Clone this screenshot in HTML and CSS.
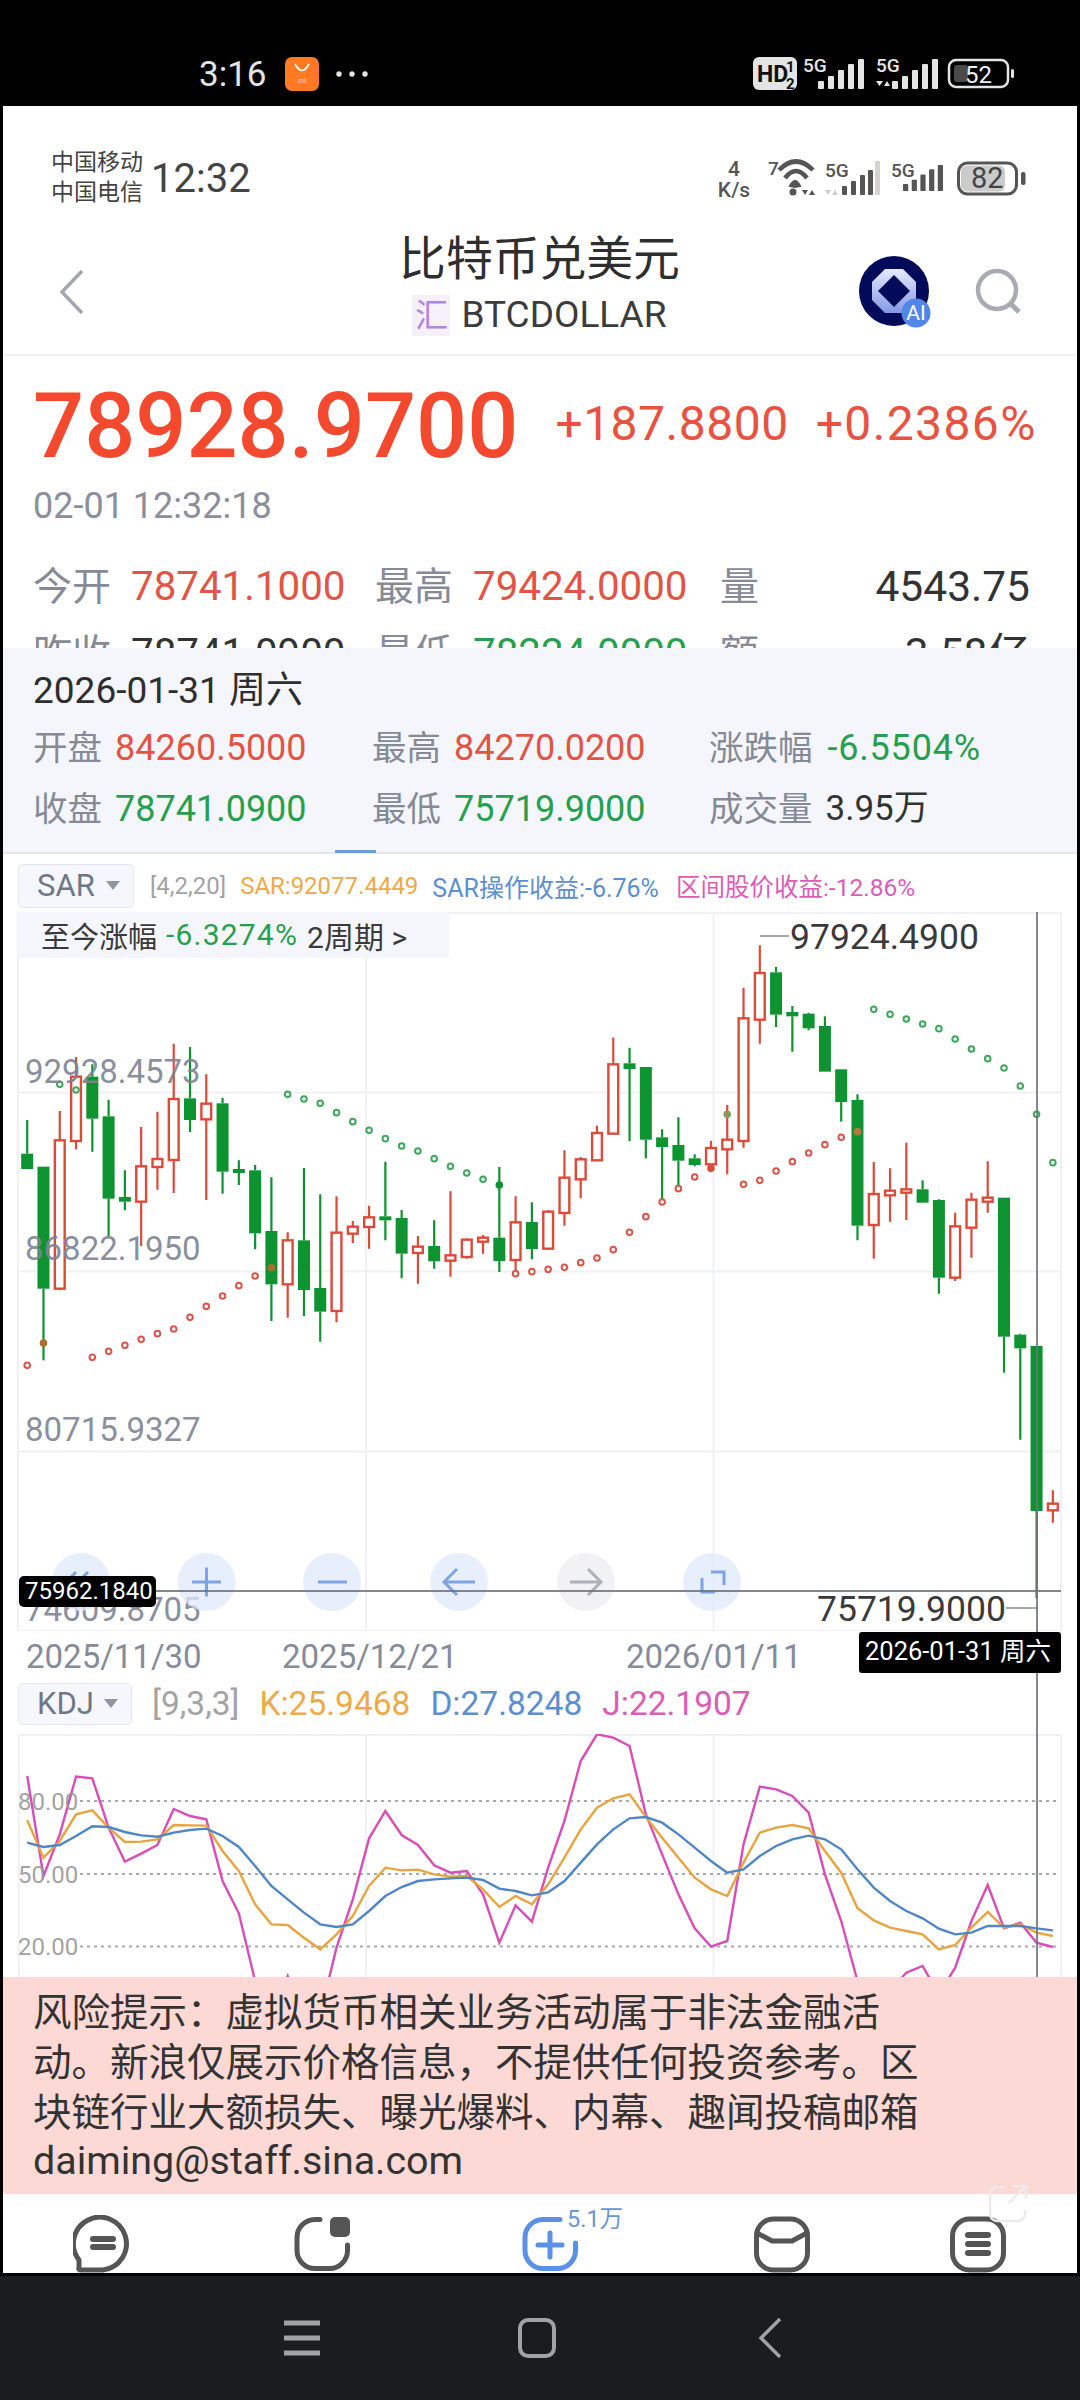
FILE: index.html
```html
<!DOCTYPE html>
<html lang="zh-CN">
<head>
    <meta charset="UTF-8">
    <meta name="viewport" content="width=device-width, initial-scale=1.0">
    <title>比特币兑美元</title>
    <link rel="stylesheet" href="styles.css">
</head>

<body>
    <svg class="defs" width="0" height="0">
        <symbol id="bars" viewBox="0 0 46 30">
            <rect x="0" y="22" width="6" height="8" rx="1"/>
            <rect x="10" y="17" width="6" height="13" rx="1"/>
            <rect x="20" y="11" width="6" height="19" rx="1"/>
            <rect x="30" y="5" width="6" height="25" rx="1"/>
            <rect x="40" y="0" width="6" height="30" rx="1"/>
        </symbol>
    </svg>

    <div class="screen">
        <div class="phone-status">
            <span class="phone-time">3:16</span>
            <svg class="shop-icon" viewBox="0 0 34 34" width="34" height="34">
                <rect width="34" height="34" rx="7" fill="#ff7a22"/>
                <path d="M10 7 Q17 20 24 7" fill="none" stroke="#fff" stroke-width="1.6"/>
                <text x="17" y="26" class="shop-mi">mi</text>
            </svg>
            <svg class="more-dots" viewBox="0 0 32 6" width="32" height="6">
                <circle cx="3" cy="3" r="2.7"/><circle cx="16" cy="3" r="2.7"/><circle cx="29" cy="3" r="2.7"/>
            </svg>
            <svg class="phone-icons" viewBox="750 55 270 40" width="270" height="40">
                <rect x="753" y="58" width="44" height="33" rx="6" fill="#e4e4e4"/>
                <text x="757" y="83" class="hd-text">HD</text>
                <text x="786" y="73" class="hd-sub">1</text>
                <text x="786" y="90" class="hd-sub">2</text>
                <text x="803" y="73" class="net-light">5G</text>
                <use href="#bars" x="818" y="60" width="46" height="30" fill="#e4e4e4"/>
                <text x="876" y="73" class="net-light">5G</text>
                <use href="#bars" x="892" y="60" width="46" height="30" fill="#e4e4e4"/>
                <path d="M876 82h7l-3.500 5zM884 87l3-5 3 5z" fill="#e4e4e4"/>
                <rect x="949" y="61" width="59" height="27" rx="7" fill="none" stroke="#e4e4e4" stroke-width="2.500"/>
                <rect x="954" y="66" width="14" height="17" rx="3" fill="#4a4a4a"/>
                <rect x="1011" y="70" width="3" height="9" rx="1.500" fill="#e4e4e4"/>
                <text x="965" y="84" class="batt-light">52</text>
            </svg>
        </div>

        <div class="app">
            <div class="sim-status">
                <div class="carriers"><div>中国移动</div><div>中国电信</div></div>
                <span class="sim-time">12:32</span>
                <svg class="sim-icons" viewBox="710 150 320 56" width="320" height="56">
                    <text x="734" y="176" class="speed">4</text>
                    <text x="734" y="197" class="speed">K/s</text>
                    <text x="768" y="175" class="wifi-num">7</text>
                    <path d="M779 170Q796 153 813 170M785 178Q796 164 807 178" fill="none" stroke="#555" stroke-width="4.500"/>
                    <path d="M790 186Q795 176 800 186L795 187z" fill="#555" stroke="#555" stroke-width="2"/>
                    <circle cx="793" cy="192" r="3.500" fill="#555"/>
                    <path d="M802 190h6l-3 5zM809 195l3-5 3 5z" fill="#555"/>
                    <text x="825" y="177" class="net-dark">5G</text>
                    <path d="M825 190h6l-3 5zM832 195l3-5 3 5z" fill="#ccc"/>
                    <g fill="#555">
                        <rect x="842" y="186" width="5" height="9" rx="1"/>
                        <rect x="851" y="181" width="5" height="14" rx="1"/>
                        <rect x="860" y="175" width="5" height="20" rx="1"/>
                        <rect x="868" y="170" width="5" height="25" rx="1"/>
                    </g>
                    <rect x="875" y="161" width="5" height="34" rx="1" fill="#d6d2d2"/>
                    <text x="891" y="177" class="net-dark">5G</text>
                    <use href="#bars" x="903" y="161" width="40" height="34" preserveAspectRatio="none" fill="#555"/>
                    <rect x="958.500" y="163" width="58" height="31" rx="9" fill="#fff" stroke="#555" stroke-width="3"/>
                    <rect x="961" y="165.500" width="44" height="26" rx="6" fill="#cbcbcb"/>
                    <rect x="1021" y="172" width="4.500" height="13" rx="2" fill="#555"/>
                    <text x="971" y="188" class="batt-dark">82</text>
                </svg>
            </div>

            <div class="title-bar">
                <svg class="back-icon" viewBox="0 0 30 46" width="30" height="46">
                    <path d="M26 2 L6 23 L26 44" fill="none" stroke="#a4a7af" stroke-width="3.500"/>
                </svg>
                <div class="title-text">
                    <div class="title-main">比特币兑美元</div>
                    <div class="title-sub"><span class="type-tag">汇</span><span>BTCDOLLAR</span></div>
                </div>
                <div class="title-tools">
                    <svg class="ai-icon" viewBox="0 0 72 72" width="72" height="72">
                        <defs>
                            <linearGradient id="ringFill" x1="0" y1="0" x2="0" y2="1">
                                <stop offset="0" stop-color="#e6eaff"/>
                                <stop offset="1" stop-color="#8397e6"/>
                            </linearGradient>
                        </defs>
                        <circle cx="35" cy="35" r="35" fill="#020a5a"/>
                        <path d="M26 13H44L57 26V44L44 57H26L13 44V26z" fill="url(#ringFill)"/>
                        <path d="M35 19L51 35L35 51L19 35z" fill="#020a5a"/>
                        <circle cx="57" cy="57" r="14.500" fill="#4f86e8"/>
                        <text x="57" y="64" class="ai-text">AI</text>
                    </svg>
                    <svg class="search-icon" viewBox="0 0 48 48" width="48" height="48">
                        <circle cx="22" cy="22" r="19" fill="none" stroke="#a9abb3" stroke-width="4.500"/>
                        <path d="M36 36L44 44" stroke="#a9abb3" stroke-width="5"/>
                    </svg>
                </div>
            </div>

            <div class="quote">
                <div class="price-line">
                    <span class="price">78928.9700</span>
                    <span class="change">+187.8800</span>
                    <span class="change change-pct">+0.2386%</span>
                </div>
                <div class="quote-time">02-01 12:32:18</div>
                <div class="stats">
                    <div class="stat"><span class="stat-label">今开</span><span class="red">78741.1000</span></div>
                    <div class="stat"><span class="stat-label">最高</span><span class="red">79424.0000</span></div>
                    <div class="stat stat-end"><span class="stat-label">量</span><span class="dark stat-big">4543.75</span></div>
                    <div class="stat"><span class="stat-label">昨收</span><span class="dark">78741.0900</span></div>
                    <div class="stat"><span class="stat-label">最低</span><span class="green">78224.0000</span></div>
                    <div class="stat stat-end"><span class="stat-label">额</span><span class="dark stat-big">3.58亿</span></div>
                </div>
            </div>

            <div class="day-tip">
                <div class="day-date">2026-01-31 周六</div>
                <div class="day-grid">
                    <div class="day-item"><span class="day-label">开盘</span><span class="red">84260.5000</span></div>
                    <div class="day-item"><span class="day-label">最高</span><span class="red">84270.0200</span></div>
                    <div class="day-item"><span class="day-label">涨跌幅</span><span class="green day-pct">-6.5504%</span></div>
                    <div class="day-item"><span class="day-label">收盘</span><span class="green">78741.0900</span></div>
                    <div class="day-item"><span class="day-label">最低</span><span class="green">75719.9000</span></div>
                    <div class="day-item"><span class="day-label">成交量</span><span class="dark day-vol">3.95万</span></div>
                </div>
            </div>

            <div class="charts">
                <div class="cross-v"></div>
                <div class="cross-h"></div>

                <div class="legend legend-sar">
                    <span class="tab-mark"></span>
                    <div class="chip"><span>SAR</span><i class="chip-arrow"></i></div>
                    <span class="legend-param">[4,2,20]</span>
                    <span class="orange">SAR:92077.4449</span>
                    <span class="blue legend-wide">SAR操作收益:-6.76%</span>
                    <span class="pink legend-last">区间股价收益:-12.86%</span>
                </div>

                <div class="chart-main">
                    <svg id="candleChart" viewBox="3 911 1074 719" width="1074" height="719">
                        <rect x="18" y="912" width="1043" height="718" class="frame"/>
                        <path d="M18 1091.500H1061M18 1270.500H1061M18 1450.500H1061M366 912V1630M713.500 912V1630" class="grid"/>
                        <g id="candles"></g>
                        <g id="sarDots"></g>
                        <text x="25" y="1082" class="axis-num">92928.4573</text>
                        <text x="25" y="1259" class="axis-num">86822.1950</text>
                        <text x="25" y="1440" class="axis-num">80715.9327</text>
                        <text x="25" y="1620" class="axis-num">74609.8705</text>
                        <path d="M760 935H789M1006 1607H1037" class="peak-line"/>
                        <text x="790" y="948" class="peak-num">97924.4900</text>
                        <text x="817" y="1620" class="peak-num">75719.9000</text>

                        <circle cx="81" cy="1581" r="29" class="btn"/>
                        <path d="M76 1571L66 1581L76 1591M88 1571L78 1581L88 1591" class="btn-line"/>
                        <circle cx="206.500" cy="1581" r="29" class="btn"/>
                        <path d="M192 1581H221M206.500 1566.500V1595.500" class="btn-line"/>
                        <circle cx="332" cy="1581" r="29" class="btn"/>
                        <path d="M318 1581H347" class="btn-line"/>
                        <circle cx="459" cy="1581" r="29" class="btn"/>
                        <path d="M444 1581H475M457 1568L444 1581L457 1594" class="btn-line"/>
                        <circle cx="586" cy="1581" r="29" class="btn-off"/>
                        <path d="M570 1581H601M588 1568L601 1581L588 1594" class="btn-off-line"/>
                        <circle cx="712" cy="1581" r="29" class="btn"/>
                        <path d="M711 1571H724V1584M702 1577V1591H715" class="btn-line"/>
                    </svg>
                    <div class="period-box">
                        <span>至今涨幅</span><span class="green period-pct">-6.3274%</span><span class="period-end">2周期 &gt;</span>
                    </div>
                </div>

                <div class="date-axis">
                    <span>2025/11/30</span><span>2025/12/21</span><span>2026/01/11</span>
                </div>

                <div class="legend legend-kdj">
                    <div class="chip chip-kdj"><span>KDJ</span><i class="chip-arrow"></i></div>
                    <span class="legend-param">[9,3,3]</span>
                    <span class="orange">K:25.9468</span>
                    <span class="blue">D:27.8248</span>
                    <span class="pink">J:22.1907</span>
                </div>

                <div class="chart-kdj">
                    <svg id="kdjChart" viewBox="3 1733 1074 243" width="1074" height="243">
                        <path d="M18 1734H1061M19 1734V1976M1061 1734V1976M366 1734V1976M713.500 1734V1976" class="grid"/>
                        <path d="M80 1800H1060M80 1873H1060M80 1945.500H1060" class="dotted"/>
                        <g id="kdjLines"></g>
                        <text x="18" y="1809" class="kdj-num">80.00</text>
                        <text x="18" y="1882" class="kdj-num">50.00</text>
                        <text x="18" y="1954" class="kdj-num">20.00</text>
                    </svg>
                </div>

                <div class="tag tag-price">75962.1840</div>
                <div class="tag tag-date">2026-01-31 周六</div>
            </div>

            <div class="notice">风险提示：虚拟货币相关业务活动属于非法金融活<br>动。新浪仅展示价格信息，不提供任何投资参考。区<br>块链行业大额损失、曝光爆料、内幕、趣闻投稿邮箱<div class="notice-mail">daiming@staff.sina.com</div></div>

            <div class="tabs">
                <svg viewBox="0 0 60 58" width="60" height="58">
                    <path d="M6 45A26.500 26.500 0 1 1 30 55H8Q5 55 6 52z" class="tab-line"/>
                    <path d="M20 24H40M20 32H40" class="tab-bars"/>
                </svg>
                <svg viewBox="0 0 56 58" width="56" height="58">
                    <path d="M26 4.500H21A18 18 0 0 0 3 22.500V35.500A18 18 0 0 0 21 53.500H35.500A18 18 0 0 0 53.500 35.500V30" class="tab-line"/>
                    <rect x="36" y="2" width="20" height="20" rx="5" fill="#555"/>
                </svg>
                <div class="tab-add">
                    <svg viewBox="0 0 56 58" width="56" height="58">
                        <path d="M38 4.500H21A18 18 0 0 0 3 22.500V35.500A18 18 0 0 0 21 53.500H35.500A18 18 0 0 0 53.500 35.500V28" class="tab-line tab-blue"/>
                        <path d="M16 30H40M28 18V42" class="tab-line tab-blue"/>
                    </svg>
                    <span class="tab-count">5.1万</span>
                </div>
                <svg viewBox="0 0 56 58" width="56" height="58">
                    <rect x="2.500" y="4" width="51" height="51" rx="17" class="tab-line"/>
                    <path d="M3 18L18 26H38L53 18" class="tab-line"/>
                </svg>
                <svg viewBox="0 0 56 58" width="56" height="58">
                    <rect x="2.500" y="4" width="51" height="51" rx="17" class="tab-line"/>
                    <path d="M18 20H38M18 29H38M18 38H38" class="tab-bars"/>
                </svg>
                <svg class="share-ghost" viewBox="0 0 40 40" width="40" height="40">
                    <path d="M16 3H9A7 7 0 0 0 2 10V30A7 7 0 0 0 9 37H30A7 7 0 0 0 37 30V26M21 19L37 3M25 2H38V15" fill="none" stroke="#ececf0" stroke-width="2.500"/>
                </svg>
            </div>
        </div>

        <div class="nav-gap"></div>
        <div class="nav">
            <svg viewBox="0 0 36 38" width="36" height="38">
                <path d="M0 4H36M0 19H36M0 34H36" stroke="#a2a2a2" stroke-width="5"/>
            </svg>
            <svg viewBox="0 0 38 40" width="38" height="40">
                <rect x="2" y="2" width="34" height="36" rx="8" fill="none" stroke="#a2a2a2" stroke-width="4"/>
            </svg>
            <svg class="nav-back" viewBox="0 0 24 40" width="24" height="40">
                <path d="M22 1L3 20L22 39" fill="none" stroke="#a2a2a2" stroke-width="3.500"/>
            </svg>
        </div>
    </div>

    <script src="chart.js"></script>
</body>

</html>
```

FILE: styles.css
```css
* {
    box-sizing: border-box;
}

body {
    margin: 0;
    background-color: #000;
    font-family: Roboto, "Noto Sans CJK SC", sans-serif;
    color: #333;
}

.defs {
    position: absolute;
}

.screen {
    width: 1080px;
    height: 2400px;
    display: flex;
    flex-direction: column;
    overflow: hidden;
}

svg {
    display: block;
    flex: none;
}

.red { color: #e25444; }
.green { color: #27a04e; }
.dark { color: #333; }
.orange { color: #ecaa48; }
.blue { color: #5c8fd0; }
.pink { color: #dd5cb6; }

/* phone status bar */
.phone-status {
    height: 106px;
    padding: 42px 60px 0 199px;
    display: flex;
    align-items: center;
    flex: none;
    color: #e4e4e4;
}

.phone-time {
    font-size: 35px;
    width: 86px;
}

.shop-mi {
    font-size: 7px;
    text-anchor: middle;
    fill: #ffd9b8;
}

.more-dots {
    margin-left: 17px;
    fill: #e4e4e4;
}

.phone-icons {
    margin-left: auto;
}

.hd-text {
    font-size: 23px;
    font-weight: 700;
    fill: #111;
}

.hd-sub {
    font-size: 15px;
    font-weight: 700;
    fill: #111;
}

.net-light {
    font-size: 19px;
    font-weight: 500;
    fill: #e4e4e4;
}

.batt-light {
    font-size: 24px;
    fill: #f0f0f0;
}

/* app window */
.app {
    margin: 0 3px;
    height: 2167px;
    background-color: #fff;
    flex: none;
    display: flex;
    flex-direction: column;
    overflow: hidden;
}

.sim-status {
    height: 120px;
    padding: 24px 47px 0 48px;
    display: flex;
    align-items: center;
    flex: none;
}

.carriers {
    font-size: 23px;
    line-height: 30px;
    color: #444;
}

.sim-time {
    margin-left: 8px;
    font-size: 40px;
    color: #444;
}

.sim-icons {
    margin-left: auto;
}

.speed {
    font-size: 21px;
    font-weight: 500;
    text-anchor: middle;
    fill: #555;
}

.wifi-num,
.net-dark {
    font-size: 19px;
    font-weight: 500;
    fill: #555;
}

.batt-dark {
    font-size: 29px;
    fill: #444;
}

/* title */
.title-bar {
    height: 130px;
    padding: 0 54px 12px 53px;
    border-bottom: 2px solid #eeeff2;
    display: grid;
    grid-template-columns: 1fr auto 1fr;
    align-items: center;
    flex: none;
}

.back-icon {
    margin-top: 15px;
}

.title-text {
    text-align: center;
    white-space: nowrap;
}

.title-main {
    font-size: 46.8px;
    line-height: 62px;
    color: #2e2e2e;
}

.title-sub {
    font-size: 37px;
    line-height: 50px;
    color: #3c3c3c;
    display: flex;
    justify-content: center;
    align-items: center;
    gap: 11px;
}

.type-tag {
    width: 38px;
    height: 41px;
    line-height: 41px;
    font-size: 33px;
    background-color: #f6f0fb;
    color: #ae88dc;
}

.title-tools {
    display: flex;
    justify-content: flex-end;
    align-items: center;
    gap: 44px;
    margin-top: 15px;
}

.ai-text {
    font-size: 21px;
    text-anchor: middle;
    fill: #fff;
}

/* quote */
.quote {
    height: 291.5px;
    padding: 20px 30px 0;
    overflow: hidden;
    flex: none;
}

.price-line {
    height: 100px;
    display: flex;
    align-items: center;
    white-space: nowrap;
}

.price {
    font-size: 90px;
    font-weight: 500;
    color: #f4492f;
    margin-right: 37px;
}

.change {
    font-size: 48px;
    letter-spacing: 0.5px;
    color: #e95240;
    margin-right: 27px;
    padding-bottom: 6px;
}

.change-pct {
    letter-spacing: 1.4px;
}

.quote-time {
    margin-top: 10px;
    font-size: 36px;
    line-height: 40px;
    color: #8b8f9b;
}

.stats {
    margin-top: 33px;
    display: grid;
    grid-template-columns: 342px 345px 310px;
    grid-auto-rows: 66.5px;
    font-size: 40.3px;
    line-height: 56px;
}

.stat {
    display: flex;
    gap: 20px;
    white-space: nowrap;
}

.stat-end {
    justify-content: space-between;
}

.stat-big {
    font-size: 42.5px;
}

.stat-label {
    font-size: 39px;
    color: #858a96;
}

/* selected day panel */
.day-tip {
    height: 204px;
    padding: 20px 30px 0;
    background-color: #f5f6fc;
    flex: none;
}

.day-date {
    font-size: 37px;
    line-height: 46px;
    color: #2e2e2e;
}

.day-grid {
    margin-top: 14px;
    display: grid;
    grid-template-columns: 339px 337px 1fr;
    grid-auto-rows: 61px;
    font-size: 36px;
    line-height: 40px;
}

.day-item {
    display: flex;
    gap: 13px;
    white-space: nowrap;
}

.day-pct {
    letter-spacing: 0.8px;
    margin-left: 2px;
}

.day-vol {
    font-size: 35px;
}

.day-label {
    font-size: 34.5px;
    color: #858a96;
}

/* charts */
.charts {
    position: relative;
    flex: none;
}

.cross-v {
    position: absolute;
    left: 1033px;
    top: 60px;
    bottom: 0;
    width: 2px;
    background-color: rgba(110, 115, 122, 0.85);
    z-index: 2;
}

.cross-h {
    position: absolute;
    left: 16px;
    right: 16px;
    top: 738px;
    height: 2px;
    background-color: rgba(110, 115, 122, 0.85);
    z-index: 2;
}

.tag {
    position: absolute;
    background-color: #000;
    color: #fff;
    font-size: 24px;
    z-index: 3;
    white-space: nowrap;
}

.tag-price {
    left: 16px;
    top: 724px;
    width: 137px;
    height: 31px;
    line-height: 31px;
    padding-left: 6px;
    border-radius: 5px;
}

.tag-date {
    left: 856px;
    top: 780px;
    width: 202px;
    height: 41px;
    line-height: 38px;
    padding-left: 6px;
    border-radius: 3px;
    font-size: 25.5px;
}

.legend {
    display: flex;
    align-items: center;
    white-space: nowrap;
    position: relative;
}

.legend-sar {
    height: 60px;
    padding: 6px 0 0 15px;
    border-top: 2px solid #e4e6eb;
    font-size: 24px;
    gap: 14px;
}

.legend-wide {
    font-size: 25px;
}

.legend-last {
    font-size: 24.5px;
    margin-left: 3px;
}

.legend-kdj {
    height: 51px;
    padding: 0 0 9px 15px;
    font-size: 33.5px;
    gap: 20px;
}

.tab-mark {
    position: absolute;
    left: 332px;
    top: -4px;
    width: 41px;
    height: 3px;
    background-color: #6f9bcf;
}

.chip {
    width: 116px;
    height: 44px;
    padding-left: 18px;
    margin-right: 2px;
    border: 1px solid #e3e6ee;
    border-radius: 5px;
    background-color: #f6f7fc;
    display: flex;
    align-items: center;
    gap: 11px;
    font-size: 31px;
    color: #6d7786;
}

.chip-kdj {
    width: 114px;
    height: 42px;
    margin-right: 0;
    gap: 10px;
}

.chip-arrow {
    width: 0;
    height: 0;
    border-left: 7px solid transparent;
    border-right: 7px solid transparent;
    border-top: 9px solid #8e96a3;
}

.legend-param {
    color: #a3a3a3;
}

.chart-main {
    position: relative;
    height: 719px;
    flex: none;
}

.frame {
    fill: #fff;
    stroke: #f0f1f6;
    stroke-width: 2;
}

.grid {
    fill: none;
    stroke: #f0f1f6;
    stroke-width: 2;
}

.axis-num {
    font-size: 33px;
    fill: rgba(125, 132, 146, 0.92);
}

.peak-num {
    font-size: 35.5px;
    fill: #3a3a3a;
}

.peak-line {
    fill: none;
    stroke: #a9a9a9;
    stroke-width: 2;
}

.btn {
    fill: rgba(223, 233, 252, 0.75);
}

.btn-line {
    fill: none;
    stroke: #7ea4e2;
    stroke-width: 3;
}

.btn-off {
    fill: rgba(238, 238, 241, 0.75);
}

.btn-off-line {
    fill: none;
    stroke: #adb0b8;
    stroke-width: 3;
}

.period-box {
    position: absolute;
    left: 15px;
    top: 0;
    width: 431px;
    height: 46px;
    padding-left: 23px;
    background-color: #f5f6fb;
    display: flex;
    align-items: center;
    gap: 9px;
    font-size: 29px;
    color: #3a3a3a;
    white-space: nowrap;
}

.period-pct {
    font-size: 30px;
    letter-spacing: 1.2px;
}

.period-end {
    font-size: 30px;
}

.date-axis {
    height: 52px;
    padding-left: 23px;
    display: grid;
    grid-template-columns: 256px 344px 1fr;
    align-items: center;
    font-size: 33px;
    color: #858b98;
}

.chart-kdj {
    height: 243px;
    flex: none;
}

.dotted {
    fill: none;
    stroke: #a9a9a9;
    stroke-width: 2;
    stroke-dasharray: 3 4;
}

.kdj-num {
    font-size: 24px;
    fill: rgba(150, 150, 150, 0.9);
}

/* notice */
.notice {
    height: 217px;
    padding: 11px 0 0 30px;
    background-color: #fdd9d6;
    font-size: 38.5px;
    line-height: 50px;
    color: #333;
    white-space: nowrap;
    flex: none;
}

.notice-mail {
    font-size: 39.4px;
    line-height: 46px;
}

/* bottom tabs */
.tabs {
    position: relative;
    height: 80px;
    padding: 21px 0 0 70px;
    display: grid;
    grid-template-columns: 221px 228px 232px 196px 1fr;
    overflow: visible;
    flex: none;
}

.tab-line {
    fill: none;
    stroke: #555;
    stroke-width: 5;
    stroke-linecap: round;
}

.tab-blue {
    stroke: #5b90e6;
}

.tab-bars {
    fill: none;
    stroke: #555;
    stroke-width: 6;
    stroke-linecap: round;
}

.tab-add {
    position: relative;
}

.tab-count {
    position: absolute;
    left: 45px;
    top: -9px;
    font-size: 23.5px;
    line-height: 26px;
    color: #6b95d8;
}

.share-ghost {
    position: absolute;
    left: 985px;
    top: -10px;
}

/* system navigation */
.nav-gap {
    height: 3px;
    flex: none;
}

.nav {
    flex: 1;
    background-color: #1b1c1e;
    padding-left: 284px;
    display: flex;
    align-items: center;
    gap: 198px;
}

.nav-back {
    margin-left: 4px;
}
```

FILE: chart.js
```js
// y values were read off a 3x crop, so they are page y * 3 from the crop top
var SVG_NS = "http://www.w3.org/2000/svg";
var RED = "#dc4b3a";
var GREEN = "#0e9331";

function candleX(i) {
    return 27.2 + 16.28 * i;
}

function priceY(v) {
    return 900 + v / 3;
}

function kdjY(v) {
    return 1680 + v / 3;
}

function addShape(parent, name, attrs) {
    var el = document.createElementNS(SVG_NS, name);
    for (var key in attrs) {
        el.setAttribute(key, attrs[key]);
    }
    parent.appendChild(el);
}

// [up, high, bodyTop, bodyBottom, low]
var candles = [
    [0, 657, 758, 804, 804], [0, 797, 797, 1163, 1378], [1, 630, 718, 1163, 1168], [1, 468, 527, 720, 745],
    [0, 490, 527, 653, 752], [0, 596, 646, 893, 1005], [0, 808, 888, 902, 928], [1, 678, 796, 902, 1035],
    [1, 632, 774, 798, 866], [1, 428, 594, 777, 876], [0, 438, 592, 657, 693], [1, 520, 608, 655, 897],
    [0, 590, 607, 812, 878], [0, 778, 804, 816, 852], [0, 792, 808, 997, 1045], [0, 829, 990, 1150, 1260],
    [1, 994, 1018, 1150, 1250], [0, 801, 1018, 1167, 1245], [0, 880, 1161, 1232, 1322], [1, 886, 995, 1230, 1264],
    [1, 960, 977, 998, 1026], [1, 914, 949, 978, 1043], [0, 782, 946, 958, 1018], [0, 927, 951, 1058, 1132],
    [1, 1005, 1037, 1056, 1148], [0, 958, 1035, 1081, 1103], [1, 871, 1063, 1079, 1127], [1, 1012, 1016, 1068, 1073],
    [1, 1002, 1010, 1022, 1058], [0, 798, 1010, 1080, 1113], [1, 886, 964, 1077, 1108], [0, 904, 963, 1044, 1075],
    [1, 928, 932, 1043, 1047], [1, 748, 830, 936, 974], [1, 768, 775, 835, 892], [1, 674, 696, 778, 778],
    [1, 410, 490, 698, 698], [0, 440, 487, 504, 720], [0, 498, 498, 716, 772], [0, 685, 709, 738, 900],
    [0, 649, 732, 779, 860], [0, 760, 772, 792, 796], [1, 720, 741, 790, 800], [1, 612, 716, 745, 820],
    [1, 260, 352, 720, 740], [1, 133, 216, 356, 428], [0, 198, 214, 341, 378], [0, 315, 333, 346, 452],
    [0, 335, 338, 382, 388], [0, 346, 375, 512, 512], [0, 505, 505, 603, 662], [0, 580, 597, 974, 1018],
    [1, 783, 879, 972, 1073], [1, 802, 869, 883, 962], [1, 725, 865, 875, 957], [0, 838, 865, 905, 905],
    [0, 895, 897, 1130, 1178], [1, 935, 976, 1130, 1140], [1, 875, 896, 980, 1070], [1, 781, 890, 902, 935],
    [0, 890, 890, 1307, 1415], [0, 1298, 1301, 1342, 1616], [0, 1335, 1335, 1830, 2091], [1, 1768, 1808, 1828, 1865]
];

var sarGreen = {
    2: 550, 3: 567, 16: 580, 17: 594, 18: 607, 19: 635, 20: 662, 21: 688, 22: 713, 23: 735, 24: 750,
    25: 773, 26: 796, 27: 816, 28: 835, 29: 852, 43: 640, 52: 325, 53: 340, 54: 354, 55: 369, 56: 383,
    57: 414, 58: 444, 59: 473, 60: 501, 61: 555, 62: 640, 63: 785
};

var sarRed = {
    0: 1393, 1: 1326, 4: 1369, 5: 1351, 6: 1333, 7: 1315, 8: 1298, 9: 1284, 10: 1249, 11: 1216, 12: 1185,
    13: 1154, 14: 1125, 15: 1100, 30: 1118, 31: 1112, 32: 1105, 33: 1099, 34: 1085, 35: 1071, 36: 1046,
    37: 994, 38: 947, 39: 903, 40: 863, 41: 828, 42: 802, 44: 850, 45: 838, 46: 810, 47: 782, 48: 756,
    49: 731, 50: 709, 51: 692
};

// dots that sit on a candle show the candle through them
var sarBlend = {
    red1: "#a8702f", red15: "#a8702f", red51: "#b5793a", red42: RED,
    green29: GREEN, green43: "#8a9a5a"
};

var lineJ = [285, 585, 460, 287, 292, 440, 542, 518, 492, 384, 405, 415, 600, 697, 900, 1000, 885, 1000, 1000, 800,
    655, 472, 390, 462, 492, 553, 575, 570, 640, 785, 673, 722, 560, 420, 240, 160, 170, 195, 400, 520,
    640, 742, 797, 780, 490, 317, 325, 345, 395, 580, 720, 900, 980, 930, 875, 855, 940, 860, 720, 612,
    742, 725, 785, 798];
var lineK = [418, 530, 480, 400, 388, 440, 483, 482, 475, 432, 433, 434, 510, 570, 670, 730, 732, 770, 805, 760,
    705, 615, 560, 568, 566, 580, 587, 585, 625, 678, 645, 670, 610, 530, 445, 380, 352, 340, 408, 470,
    530, 590, 625, 645, 545, 455, 440, 432, 442, 510, 575, 682, 718, 740, 750, 760, 805, 792, 740, 693,
    740, 730, 755, 765];
var lineD = [485, 498, 492, 465, 436, 438, 453, 463, 467, 455, 447, 443, 465, 498, 555, 615, 655, 695, 730, 738,
    730, 690, 645, 618, 600, 595, 592, 590, 597, 623, 630, 643, 634, 600, 545, 490, 445, 412, 408, 425,
    460, 500, 540, 575, 565, 525, 495, 475, 464, 475, 505, 565, 620, 660, 690, 712, 743, 760, 755, 735,
    735, 735, 742, 748];

function drawCandles() {
    var group = document.getElementById("candles");
    candles.forEach(function (c, i) {
        var x = candleX(i);
        var color = c[0] ? RED : GREEN;
        var top = priceY(c[2]);
        var bottom = priceY(c[3]);
        addShape(group, "path", {
            d: "M" + x + " " + priceY(c[1]) + "V" + top + "M" + x + " " + bottom + "V" + priceY(c[4]),
            stroke: color,
            "stroke-width": 2.2
        });
        if (c[0]) {
            addShape(group, "rect", {
                x: x - 4.9, y: top, width: 9.8, height: bottom - top,
                fill: "#fff", stroke: color, "stroke-width": 2.4
            });
        } else {
            addShape(group, "rect", {
                x: x - 6, y: top, width: 12, height: bottom - top, fill: color
            });
        }
    });
}

function drawDots(points, color, name) {
    var group = document.getElementById("sarDots");
    for (var i in points) {
        var blend = sarBlend[name + i];
        addShape(group, "circle", {
            cx: candleX(Number(i)),
            cy: priceY(points[i]),
            r: 2.8,
            fill: blend || "#fff",
            stroke: blend || color,
            "stroke-width": 2
        });
    }
}

function drawLine(values, color) {
    var pts = values.map(function (v, i) {
        return candleX(i) + "," + kdjY(v);
    });
    addShape(document.getElementById("kdjLines"), "polyline", {
        points: pts.join(" "),
        fill: "none",
        stroke: color,
        "stroke-width": 2.4
    });
}

drawCandles();
drawDots(sarGreen, "#3fa85c", "green");
drawDots(sarRed, "#d8574a", "red");
drawLine(lineJ, "#d94db8");
drawLine(lineK, "#e8a440");
drawLine(lineD, "#4f86c6");
```
